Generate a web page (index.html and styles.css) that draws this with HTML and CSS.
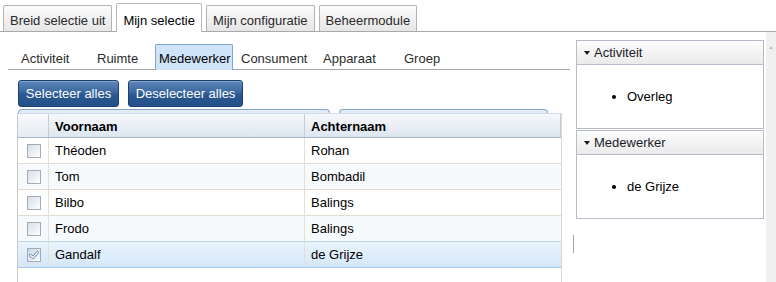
FILE: index.html
```html
<!DOCTYPE html>
<html lang="nl">
<head>
<meta charset="utf-8">
<title>Mijn selectie</title>
<link rel="stylesheet" href="styles.css">
</head>
<body>
<div class="tabbar">
  <div class="tab">Breid selectie uit</div>
  <div class="tab active">Mijn selectie</div>
  <div class="tab">Mijn configuratie</div>
  <div class="tab">Beheermodule</div>
</div>
<div class="main">
  <div class="left">
    <div class="subtabs">
      <div class="subtab">Activiteit</div>
      <div class="subtab">Ruimte</div>
      <div class="subtab"><span class="subtab-active">Medewerker</span></div>
      <div class="subtab">Consument</div>
      <div class="subtab">Apparaat</div>
      <div class="subtab">Groep</div>
    </div>
    <div class="buttons">
      <button class="btn btn-select">Selecteer alles</button>
      <button class="btn btn-deselect">Deselecteer alles</button>
    </div>
    <div class="ghosts">
      <div class="ghost ghost-a"></div>
      <div class="ghost ghost-b"></div>
    </div>
    <div class="grid">
      <div class="row head">
        <div class="cell cb"></div>
        <div class="cell">Voornaam</div>
        <div class="cell">Achternaam</div>
      </div>
      <div class="row">
        <div class="cell cb"><span class="check"></span></div>
        <div class="cell">Théoden</div>
        <div class="cell">Rohan</div>
      </div>
      <div class="row alt">
        <div class="cell cb"><span class="check"></span></div>
        <div class="cell">Tom</div>
        <div class="cell">Bombadil</div>
      </div>
      <div class="row">
        <div class="cell cb"><span class="check"></span></div>
        <div class="cell">Bilbo</div>
        <div class="cell">Balings</div>
      </div>
      <div class="row alt">
        <div class="cell cb"><span class="check"></span></div>
        <div class="cell">Frodo</div>
        <div class="cell">Balings</div>
      </div>
      <div class="row selected">
        <div class="cell cb"><span class="check checked"><svg width="12" height="12" viewBox="0 0 12 12"><path d="M2.5 6.2 L5 8.6 L9.6 3.2" fill="none" stroke="#5d86b3" stroke-width="2.8" stroke-linecap="round" stroke-linejoin="round"/><path d="M2.5 6.2 L5 8.6 L9.6 3.2" fill="none" stroke="#ffffff" stroke-width="1.3" stroke-linecap="round" stroke-linejoin="round"/></svg></span></div>
        <div class="cell">Gandalf</div>
        <div class="cell">de Grijze</div>
      </div>
    </div>
  </div>
  <div class="splitter"><div class="splitter-line"></div></div>
  <div class="right">
    <div class="panel">
      <div class="panel-head"><span class="tri"></span>Activiteit</div>
      <div class="panel-body">
        <ul><li>Overleg</li></ul>
      </div>
    </div>
    <div class="panel panel-2">
      <div class="panel-head"><span class="tri"></span>Medewerker</div>
      <div class="panel-body">
        <ul><li>de Grijze</li></ul>
      </div>
    </div>
  </div>
  <div class="scrollbar"><span class="arrow-up"></span></div>
</div>
</body>
</html>
```
FILE: styles.css
```css
html, body {
  margin: 0;
  padding: 0;
  background: #ffffff;
}
body {
  width: 776px;
  height: 282px;
  overflow: hidden;
  font-family: "Liberation Sans", Arial, sans-serif;
  font-size: 13px;
  color: #000;
}

/* top tabs */
.tabbar {
  display: flex;
  align-items: flex-end;
  gap: 4px;
  height: 31px;
  padding-left: 3px;
  border-bottom: 1px solid #a9a9a9;
  box-sizing: content-box;
}
.tab {
  height: 26px;
  line-height: 29px;
  padding: 0 6px;
  border: 1px solid #b4b4b4;
  border-bottom: none;
  border-radius: 2px 2px 0 0;
  background: linear-gradient(#fbfbfb, #e6e6e6);
  color: #2a2a2a;
  white-space: nowrap;
  box-sizing: border-box;
}
.tab.active {
  height: 29px;
  line-height: 33px;
  margin-bottom: -1px;
  background: #ffffff;
  color: #000;
  border-color: #b8b8b8;
}

.main {
  display: flex;
  height: 250px;
}

/* left column */
.left {
  width: 562px;
  margin-left: 8px;
  display: flex;
  flex-direction: column;
}
.subtabs {
  margin-top: 12px;
  height: 25px;
  padding-left: 9px;
  border-bottom: 1px solid #a8a8a8;
  display: grid;
  grid-template-columns: 76px 62px 82px 82px 81px 60px;
  align-items: stretch;
}
.subtab {
  padding: 0 4px;
  line-height: 29px;
  color: #2b2b2b;
  white-space: nowrap;
}
.subtab:nth-child(3) {
  padding: 0;
}
.subtab-active {
  display: block;
  width: 78px;
  height: 26px;
  box-sizing: border-box;
  padding-left: 3px;
  line-height: 27px;
  background: #cfe4f8;
  border: 1px solid #7ea6d0;
  border-bottom: none;
  border-radius: 2px 2px 0 0;
  color: #000;
}

.buttons {
  display: flex;
  gap: 9px;
  margin-top: 10px;
  padding-left: 10px;
}
.btn {
  height: 27px;
  padding: 0;
  font-family: "Liberation Sans", Arial, sans-serif;
  font-size: 13px;
  color: #ffffff;
  border: 1px solid #1f416f;
  border-radius: 3px;
  background: linear-gradient(#5f88bb 0%, #3a679f 45%, #2b5891 55%, #24508a 100%);
  box-shadow: inset 0 1px 0 rgba(255,255,255,0.25);
  cursor: pointer;
}
.btn-select { width: 101px; }
.btn-deselect { width: 115px; }

.ghosts {
  display: flex;
  gap: 9px;
  margin-top: 2px;
  padding-left: 10px;
  height: 4px;
}
.ghost {
  height: 4px;
  box-sizing: border-box;
  border: 1px solid #86a3c9;
  border-bottom: none;
  border-radius: 4px 4px 0 0;
  background: #e2ecf7;
}
.ghost-a { width: 312px; }
.ghost-b { width: 209px; }

/* grid */
.grid {
  flex: 1;
  margin-left: 9px;
  width: 545px;
  box-sizing: border-box;
  border-left: 1px solid #c9c9c9;
  border-right: 1px solid #dcd8cf;
  border-top: 1px solid #d3dbe4;
}
.row {
  display: grid;
  grid-template-columns: 31px 256px 256px;
  height: 26px;
  box-sizing: border-box;
  border-bottom: 1px solid #e3ddd1;
  background: #ffffff;
}
.row.alt {
  background: #f7fafd;
}
.row.head {
  height: 24px;
  border-bottom: 1px solid #a7b6c6;
  background: linear-gradient(#f6f8fb, #dde6ef);
  font-weight: bold;
}
.row.selected {
  border-top: 1px solid #bcd5ef;
  border-bottom: 1px solid #a9c8e7;
  margin-top: -1px;
  height: 27px;
  background: linear-gradient(#e9f3fc, #d4e7f8);
}
.cell {
  display: flex;
  align-items: center;
  padding-left: 6px;
  box-sizing: border-box;
  border-right: 1px solid #e6e0d4;
  white-space: nowrap;
}
.cell:last-child {
  border-right: none;
}
.row.head .cell {
  border-right: 1px solid #c4ccd6;
  padding-top: 1px;
}
.row.head .cell.cb {
  background: linear-gradient(#f8fafc, #e4ebf2);
}
.cell.cb {
  padding-left: 0;
  justify-content: center;
}
.check {
  display: block;
  width: 14px;
  height: 14px;
  box-sizing: border-box;
  border: 1px solid #a6abb1;
  background: linear-gradient(135deg, #d6dfe9 0%, #eef2f6 60%, #ffffff 100%);
  margin-left: 1px;
}
.check.checked {
  background: linear-gradient(135deg, #c6d6e7 0%, #e3ecf5 60%, #ffffff 100%);
}
.check svg {
  display: block;
  margin: 0;
}

/* splitter */
.splitter {
  width: 6px;
}
.splitter-line {
  width: 1px;
  height: 18px;
  margin-left: 3px;
  margin-top: 203px;
  background: #a8a8a8;
}

/* right panels */
.right {
  width: 189px;
  padding-top: 8px;
  box-sizing: border-box;
}
.panel {
  width: 188px;
  box-sizing: border-box;
  border: 1px solid #b7bbca;
}
.panel-2 {
  margin-top: 1px;
}
.panel-head {
  height: 24px;
  box-sizing: border-box;
  border-bottom: 1px solid #b7bbca;
  background: linear-gradient(#fdfdfd, #eaeaea);
  display: flex;
  align-items: center;
  padding-left: 7px;
  color: #1a1a2a;
}
.tri {
  display: block;
  width: 0;
  height: 0;
  border-left: 3.5px solid transparent;
  border-right: 3.5px solid transparent;
  border-top: 4px solid #1a1a1a;
  margin-right: 4px;
  margin-top: 1px;
}
.panel-body {
  height: 63px;
  box-sizing: border-box;
  padding-top: 24px;
}
.panel-body ul {
  margin: 0;
  padding-left: 50px;
  line-height: 16px;
}

/* scrollbar */
.scrollbar {
  width: 10px;
  margin-left: 1px;
  background: #f0f0f0;
  position: relative;
}
.arrow-up {
  position: absolute;
  left: 3px;
  top: 14px;
  width: 0;
  height: 0;
  border-left: 2px solid transparent;
  border-right: 2px solid transparent;
  border-bottom: 3px solid #c2c2c2;
}
```
